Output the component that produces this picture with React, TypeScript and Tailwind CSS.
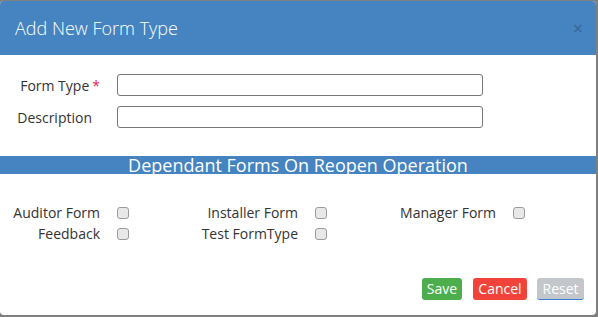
import React from 'react';

const font = { fontFamily: '"Open Sans", "Noto Sans", Arial, sans-serif' };

const deps = [
  ['Auditor Form', 'Installer Form', 'Manager Form'],
  ['Feedback', 'Test FormType', null],
];

function Box() {
  return (
    <span className="inline-block h-[12px] w-[12px] rounded-[3px] border border-[#9a9a9a] bg-[#e8e8e8]" />
  );
}

export default function App() {
  return (
    <div className="h-[317px] w-[598px] bg-[#7f7f7f] pt-px" style={font}>
      <div className="flex h-[314px] w-[596px] flex-col overflow-hidden rounded-[4px] bg-white">
        {/* Header */}
        <div className="flex h-[54px] shrink-0 items-center justify-between bg-[#4584c1] pl-[15px] pr-[13px]">
          <h1 className="text-[18px] font-light leading-none text-white">Add New Form Type</h1>
          <span className="text-[18px] leading-none text-[#35608c] opacity-80">×</span>
        </div>

        {/* Fields */}
        <div className="mt-[19px] flex flex-col gap-[10px]">
          <div className="flex items-center">
            <label className="w-[100px] text-right text-[14px] text-[#333]">
              Form Type<span className="ml-[3px] text-[#e0245e]">*</span>
            </label>
            <input className="ml-[17px] h-[22px] w-[366px] rounded-[3px] border border-[#777] outline-none" />
          </div>
          <div className="flex items-center">
            <label className="w-[92px] text-right text-[14px] text-[#333]">Description</label>
            <input className="ml-[25px] h-[22px] w-[366px] rounded-[3px] border border-[#777] outline-none" />
          </div>
        </div>

        {/* Section */}
        <div className="mt-[28px] h-[18px] bg-[#4584c1] text-center text-[18px] leading-[18px] text-white">
          Dependant Forms On Reopen Operation
        </div>

        <div className="mt-[30px] flex flex-col gap-[3px]">
          {deps.map((row, r) => (
            <div key={r} className="grid grid-cols-[198px_198px_198px] text-[14px] leading-[18px] text-[#333]">
              {row.map((name, c) => (
                <div key={c} className="flex items-center">
                  {name && (
                    <>
                      <span className="w-[100px] text-right">{name}</span>
                      <span className="ml-[17px] flex items-center"><Box /></span>
                    </>
                  )}
                </div>
              ))}
            </div>
          ))}
        </div>

        {/* Footer */}
        <div className="mt-auto mb-[15px] flex justify-end pr-[12px] text-[14px] text-white">
          <button className="h-[22px] w-[40px] rounded-[3px] bg-[#4cae4c] leading-[22px]">Save</button>
          <button className="ml-[11px] h-[22px] w-[54px] rounded-[3px] bg-[#f2433a] leading-[22px]">Cancel</button>
          <button className="ml-[10px] h-[22px] w-[47px] rounded-[3px] border-b border-[#3a7fd0] bg-[#c3c6ca] leading-[21px]">Reset</button>
        </div>
      </div>
    </div>
  );
}
